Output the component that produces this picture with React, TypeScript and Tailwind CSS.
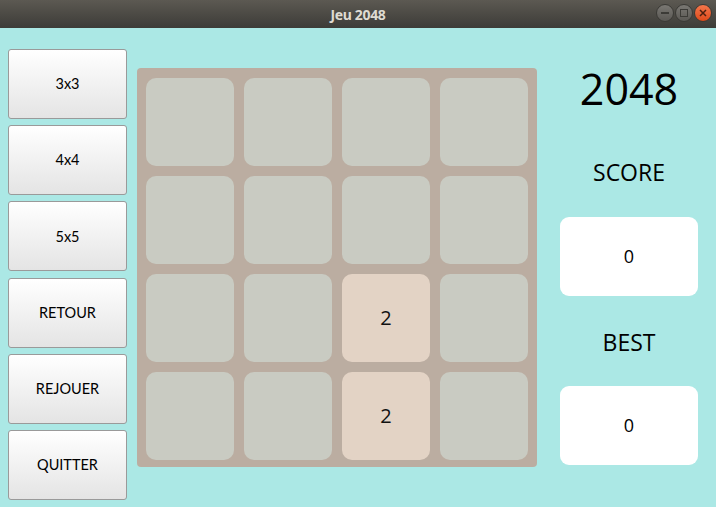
import React from "react";

const buttons = ["3x3", "4x4", "5x5", "RETOUR", "REJOUER", "QUITTER"];
const grid = [
  [0, 0, 0, 0],
  [0, 0, 0, 0],
  [0, 0, 2, 0],
  [0, 0, 2, 0],
];

export default function App() {
  return (
    <div className="w-[716px] h-[507px] flex flex-col overflow-hidden bg-[#abe8e5]">
      {/* Title bar */}
      <div className="h-[28px] shrink-0 flex items-center relative bg-gradient-to-b from-[#5c5952] to-[#3d3c38]">
        <div className="flex-1 text-center text-[14px] font-bold text-[#dfdbd2] [font-family:'Noto_Sans',sans-serif] tracking-tight">
          Jeu 2048
        </div>
        <div className="absolute right-[4px] top-[4px] flex gap-[1px]">
          <div className="w-[18px] h-[18px] rounded-full bg-gradient-to-b from-[#7a7873] to-[#5a5854] border border-[#3b3a36] flex items-center justify-center">
            <div className="w-[8px] h-[2px] bg-[#3c3b37]" />
          </div>
          <div className="w-[18px] h-[18px] rounded-full bg-gradient-to-b from-[#7a7873] to-[#5a5854] border border-[#3b3a36] flex items-center justify-center">
            <div className="w-[8px] h-[8px] border-[1.5px] border-[#3c3b37]" />
          </div>
          <div className="w-[18px] h-[18px] rounded-full bg-gradient-to-b from-[#f4764a] to-[#dd4a18] border border-[#3b3a36] flex items-center justify-center">
            <svg width="8" height="8" viewBox="0 0 8 8">
              <path d="M1 1 L7 7 M7 1 L1 7" stroke="#4a2010" strokeWidth="1.5" />
            </svg>
          </div>
        </div>
      </div>

      {/* Content */}
      <div className="flex flex-1">
        {/* Left buttons */}
        <div className="flex flex-col gap-[6.2px] pl-[8px] pt-[21px]">
          {buttons.map((b) => (
            <div
              key={b}
              className="w-[119px] h-[70px] rounded-[3px] border border-[#9a9a9a] bg-gradient-to-b from-[#ffffff] to-[#e4e4e4] flex items-center justify-center text-[14.5px] text-black [font-family:Lato,sans-serif]"
            >
              {b}
            </div>
          ))}
        </div>

        {/* Board */}
        <div className="ml-[10px] mt-[40px] w-[400px] h-[399px] rounded-[4px] bg-[#bbada1] pt-[10px] pb-[7px] px-[9px] grid grid-cols-4 grid-rows-4 gap-[10px]">
          {grid.flat().map((v, i) => (
            <div
              key={i}
              className={
                "rounded-[10px] flex items-center justify-center text-[20px] text-[#111] [font-family:'Open_Sans',sans-serif] " +
                (v ? "bg-[#e3d3c5]" : "bg-[#c9cbc2]")
              }
            >
              {v ? v : ""}
            </div>
          ))}
        </div>

        {/* Right panel */}
        <div className="ml-[23px] w-[138px] flex flex-col items-stretch [font-family:'Open_Sans',sans-serif] text-black">
          <div className="mt-[31px] h-[60px] leading-[60px] text-center text-[43px]">2048</div>
          <div className="mt-[33px] h-[40px] leading-[40px] text-center text-[23px]">SCORE</div>
          <div className="mt-[25px] h-[79px] rounded-[9px] bg-white flex items-center justify-center text-[18px]">0</div>
          <div className="mt-[26px] h-[40px] leading-[40px] text-center text-[23px]">BEST</div>
          <div className="mt-[24px] h-[79px] rounded-[9px] bg-white flex items-center justify-center text-[18px]">0</div>
        </div>
      </div>
    </div>
  );
}
